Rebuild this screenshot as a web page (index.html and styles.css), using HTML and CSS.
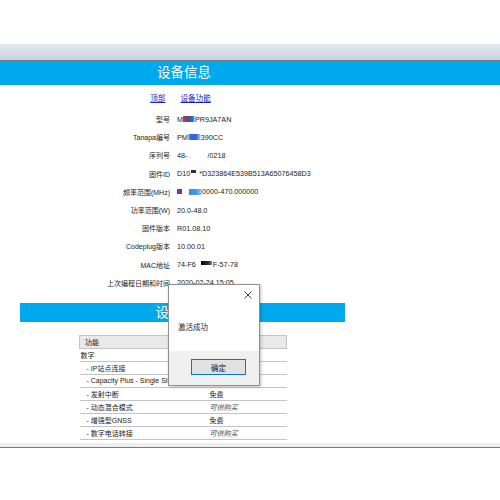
FILE: index.html
```html
<!DOCTYPE html>
<html lang="zh-CN">
<head>
<meta charset="utf-8">
<link rel="stylesheet" href="styles.css">
</head>
<body>
<div class="top-space"></div>
<div class="toolbar"></div>
<div class="banner"><div class="banner-inner">设备信息</div></div>
<div class="links"><a href="#">顶部</a><a href="#">设备功能</a></div>
<div class="info">
  <div class="row"><span class="lbl">型号</span><span class="val">M<i class="blob b-rb"></i>PR9JA7AN</span></div>
  <div class="row"><span class="lbl">Tanapa编号</span><span class="val">PM<i class="blob b-blue"></i>390CC</span></div>
  <div class="row"><span class="lbl">序列号</span><span class="val">48-<i class="blob b-white"></i>/0218</span></div>
  <div class="row"><span class="lbl">固件ID</span><span class="val">D10<i class="blob b-black-s"></i>*D323864E539B513A65076458D3</span></div>
  <div class="row"><span class="lbl">频率范围(MHz)</span><span class="val"><i class="blob b-purple"></i><i class="blob b-lblue"></i>0000-470.000000</span></div>
  <div class="row"><span class="lbl">功率范围(W)</span><span class="val">20.0-48.0</span></div>
  <div class="row"><span class="lbl">固件版本</span><span class="val">R01.08.10</span></div>
  <div class="row"><span class="lbl">Codeplug版本</span><span class="val">10.00.01</span></div>
  <div class="row"><span class="lbl">MAC地址</span><span class="val">74-F6<i class="blob b-black"></i>F-57-78</span></div>
  <div class="row"><span class="lbl">上次编程日期和时间</span><span class="val">2020-02-24 15:05</span></div>
</div>
<div class="bar2">设备功能</div>
<table class="feat">
  <tr class="head"><td>功能</td><td></td></tr>
  <tr><td>数字</td><td></td></tr>
  <tr><td class="ind">- IP站点连接</td><td></td></tr>
  <tr><td class="ind">- Capacity Plus - Single Site</td><td></td></tr>
  <tr><td class="ind">- 发射中断</td><td>免费</td></tr>
  <tr><td class="ind">- 动态混合模式</td><td class="buy">可供购买</td></tr>
  <tr><td class="ind">- 增强型GNSS</td><td>免费</td></tr>
  <tr><td class="ind">- 数字电话转接</td><td class="buy">可供购买</td></tr>
</table>
<div class="footer"></div>

<div class="dialog">
  <div class="dlg-title">
    <svg class="close" width="8" height="8" viewBox="0 0 8 8"><path d="M0.5 0.5L7.5 7.5M7.5 0.5L0.5 7.5" stroke="#222" stroke-width="0.9" fill="none"/></svg>
  </div>
  <div class="dlg-body">激活成功</div>
  <div class="dlg-foot"><button class="ok">确定</button></div>
</div>
</body>
</html>
```
FILE: styles.css
```css
html, body { margin: 0; padding: 0; background: #fff; }
body {
  font-family: "Liberation Sans", "Noto Sans CJK SC", sans-serif;
  font-size: 7px;
  color: #222;
  position: relative;
  width: 500px;
  height: 500px;
  overflow: hidden;
}
.top-space { height: 44px; }
.toolbar {
  height: 16px;
  background: linear-gradient(#e3e9f0, #c9d3df);
  border-bottom: 1px solid #7d7d7d;
}
.banner { height: 24px; background: #00a9ee; }
.banner-inner {
  width: 368px;
  text-align: center;
  color: #fff;
  font-size: 13.5px;
  line-height: 24px;
}
.links {
  width: 361px;
  height: 24px;
  display: flex;
  justify-content: center;
  align-items: center;
  gap: 15px;
  font-size: 7.6px;
}
.links a { color: #1a1acc; text-decoration: underline; }
.info { padding-top: 1px; }
.row {
  display: grid;
  grid-template-columns: 170px 1fr;
  column-gap: 7px;
  height: 18.2px;
  align-items: center;
}
.lbl { text-align: right; }
.val { display: flex; align-items: center; white-space: nowrap; font-size: 7.2px; }
.blob { display: inline-block; height: 6px; }
.b-rb { width: 12px; background: linear-gradient(90deg, #b04050, #8a3a60 40%, #1e5fc8 55%, #2a70d8 85%, #e0e8f8); }
.b-blue { width: 13px; background: linear-gradient(90deg, #a0c0f0, #2a6fd6 20%, #3a5ad0 60%, #7a9ee8 85%, #fff); }
.b-white { width: 20px; }
.b-black-s { width: 5px; height: 3px; margin: 0 3px 0 1px; background: #333; transform: translateY(-2px); }
.b-purple { width: 5px; height: 5px; background: #6a3aa8; margin-right: 7px; }
.b-lblue { width: 13px; background: linear-gradient(90deg, #3a88e8, #4a98f0 60%, #b0d0f8); }
.b-black { width: 11px; height: 4px; margin: 0 1px 0 5px; background: linear-gradient(90deg, #000, #333 70%, #888); transform: translateY(-2px); }
.bar2 {
  margin: 11px 0 0 20px;
  width: 325px;
  height: 19px;
  background: #00a9ee;
  color: #fff;
  font-size: 13.5px;
  line-height: 19px;
  text-align: center;
}
.feat {
  margin: 13px 0 0 79px;
  width: 208px;
  border-collapse: collapse;
  font-size: 7px;
}
.feat td {
  height: 12px;
  padding: 0 0 0 1px;
  border-bottom: 1px solid #c4c4c4;
  white-space: nowrap;
}
.feat td:first-child { width: 122px; }
.feat .head td { background: #e9e9e9; border-top: 1px solid #c4c4c4; }
.feat .head td:first-child { border-left: 1px solid #c4c4c4; padding-left: 5px; }
.feat .head td:last-child { border-right: 1px solid #c4c4c4; }
.feat .ind { padding-left: 7px; }
.feat .buy { font-style: italic; color: #444; }
.footer {
  margin-top: 3px;
  height: 4px;
  background: #efefef;
  border-bottom: 1px solid #777;
}
.dialog {
  position: absolute;
  left: 168px;
  top: 284px;
  width: 90px;
  height: 100px;
  background: #fff;
  border: 1px solid #8f8f8f;
  box-shadow: 1px 1px 3px rgba(0,0,0,0.25);
  display: flex;
  flex-direction: column;
}
.dlg-title { height: 20px; display: flex; justify-content: flex-end; align-items: center; padding-right: 7px; }
.dlg-title .close { display: block; }
.dlg-body { height: 46px; padding-left: 9px; font-size: 7.5px; line-height: 46px; }
.dlg-foot { flex: 1; background: #f0f0f0; padding: 8px 0 0 22px; }
.ok {
  width: 55px;
  height: 16px;
  margin: 0;
  padding: 0;
  background: #e1e1e1;
  border: 1.5px solid #0078d7;
  font-family: "Liberation Sans", "Noto Sans CJK SC", sans-serif;
  font-size: 7.5px;
  color: #222;
}
```
